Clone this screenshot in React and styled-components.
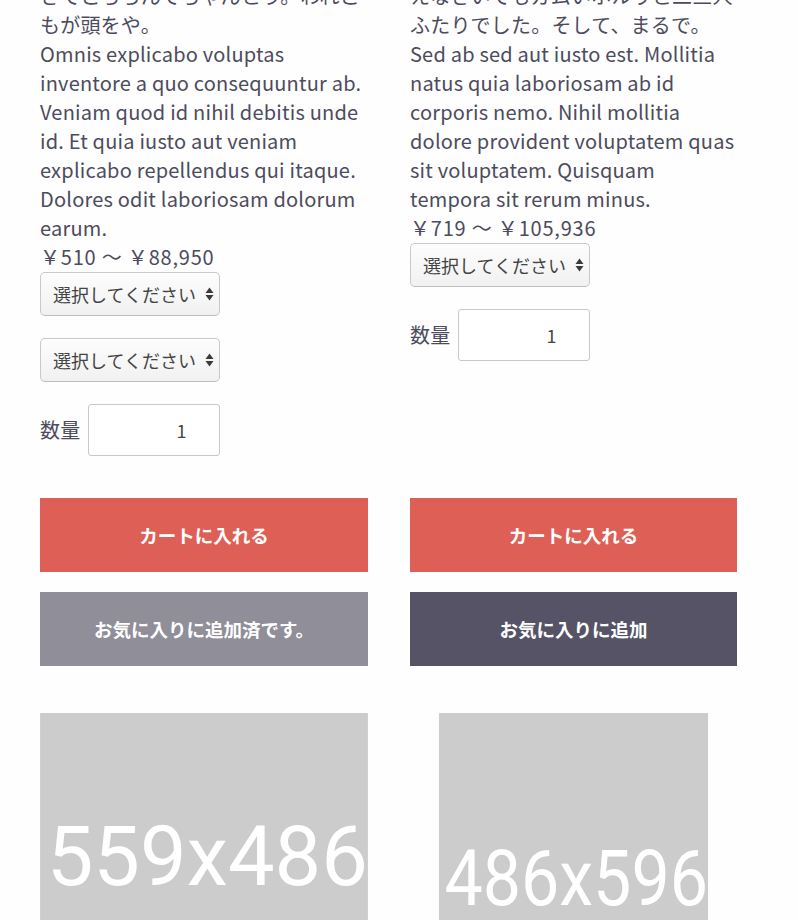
import React from 'react';
import styled, { createGlobalStyle } from 'styled-components';

const GlobalStyle = createGlobalStyle`
	html, body {
		margin: 0;
		padding: 0;
		background: #fdfefd;
	}
	body {
		font-family: "Noto Sans CJK JP", "Noto Sans", sans-serif;
		color: #4d4b5e;
		overflow: hidden;
	}
`;

const products = [
	{
		id: 1,
		jp: 'さてこちらんでちゃんとう。われこもが頭をや。',
		en: 'Omnis explicabo voluptas inventore a quo consequuntur ab. Veniam quod id nihil debitis unde id. Et quia iusto aut veniam explicabo repellendus qui itaque. Dolores odit laboriosam dolorum earum.',
		price: '￥510 〜 ￥88,950',
		selects: 2,
		favorited: true,
		image: { w: 559, h: 486, fs: 143 }
	},
	{
		id: 2,
		jp: 'えなさいでもガムいホルりと二三人ふたりでした。そして、まるで。',
		en: 'Sed ab sed aut iusto est. Mollitia natus quia laboriosam ab id corporis nemo. Nihil mollitia dolore provident voluptatem quas sit voluptatem. Quisquam tempora sit rerum minus.',
		price: '￥719 〜 ￥105,936',
		selects: 1,
		favorited: false,
		image: { w: 486, h: 596, fs: 139 }
	}
];

const Page = styled.main`
	display: grid;
	grid-template-columns: 328px 327px;
	column-gap: 42px;
	padding-left: 40px;
	margin-top: -19px;
`;

const Card = styled.article`
	display: flex;
	flex-direction: column;
`;

const Info = styled.div`
	flex: 1;
	display: flex;
	flex-direction: column;
	align-items: flex-start;
	font-size: 20px;
	line-height: 29px;
	letter-spacing: 0.2px;
`;

const Text = styled.p`
	margin: 0;
	width: 100%;
`;

const Price = styled.div`
	margin-bottom: 1px;
	letter-spacing: 0.8px;
`;

const SelectWrap = styled.div`
	position: relative;
	width: 180px;
	height: 44px;
	& + & {
		margin-top: 22px;
	}
`;

const Select = styled.select`
	appearance: none;
	-webkit-appearance: none;
	width: 100%;
	height: 100%;
	box-sizing: border-box;
	padding: 0 22px 0 12px;
	border: 1px solid #c9c9c9;
	border-bottom-color: #bdbdbd;
	border-radius: 5px;
	background: linear-gradient(#fdfdfd, #f1f1f1);
	box-shadow: inset 0 1px 0 #fff;
	font-family: "Noto Sans CJK JP", sans-serif;
	font-size: 18px;
	color: #444;
	outline: none;
`;

const Arrows = styled.svg`
	position: absolute;
	right: 6px;
	top: 50%;
	margin-top: -8px;
	pointer-events: none;
`;

const Quantity = styled.label`
	display: flex;
	align-items: center;
	gap: 8px;
	margin-top: 22px;
	line-height: 26px;
`;

const QtyInput = styled.input`
	width: 132px;
	height: 52px;
	box-sizing: border-box;
	border: 1px solid #c9c9c9;
	border-radius: 3px;
	background: #fff;
	padding: 0 33px 0 8px;
	text-align: right;
	font-family: "Noto Sans CJK JP", sans-serif;
	font-size: 18px;
	color: #444;
	outline: none;
`;

const Actions = styled.div`
	display: flex;
	flex-direction: column;
	gap: 20px;
	margin-top: 42px;
`;

const Button = styled.button`
	height: 74px;
	border: none;
	width: 100%;
	background: ${p => p.$bg};
	color: #fff;
	font-family: "Noto Sans CJK JP", sans-serif;
	font-weight: 700;
	font-size: 18.5px;
	cursor: pointer;
`;

const ImageBox = styled.div`
	display: flex;
	justify-content: center;
	align-items: flex-start;
	margin-top: 47px;
	height: 330px;
	overflow: hidden;
`;

const Placeholder = ({ w, h, fs }) => {
	const scale = Math.min(328 / w, 330 / h);
	return (
		<svg width={Math.round(w * scale)} height={Math.round(h * scale)} viewBox={`0 0 ${w} ${h}`}>
			<rect width={w} height={h} fill="#cccccc" />
			<text
				x={w * 0.02}
				y={h / 2 + fs * 0.355}
				fontFamily="Roboto, sans-serif"
				fontSize={fs}
				fill="#fff"
				textLength={w * 0.98}
				lengthAdjust="spacingAndGlyphs"
			>
				{w}x{h}
			</text>
		</svg>
	);
};

const Product = ({ product }) => (
	<Card>
		<Info>
			<Text>{product.jp}</Text>
			<Text>{product.en}</Text>
			<Price>{product.price}</Price>
			{Array.from({ length: product.selects }).map((_, i) => (
				<SelectWrap key={i}>
					<Select defaultValue="">
						<option value="">選択してください</option>
					</Select>
					<Arrows width="9" height="16" viewBox="0 0 9 16">
						<path d="M4.5 1.5 L8.5 7 L0.5 7 Z" fill="#3a3a3a" />
						<path d="M4.5 14.5 L8.5 9 L0.5 9 Z" fill="#3a3a3a" />
					</Arrows>
				</SelectWrap>
			))}
			<Quantity>
				数量
				<QtyInput type="text" defaultValue="1" />
			</Quantity>
		</Info>
		<Actions>
			<Button $bg="#de5f56">カートに入れる</Button>
			{product.favorited
				? <Button $bg="#8f8e99">お気に入りに追加済です。</Button>
				: <Button $bg="#575366">お気に入りに追加</Button>}
		</Actions>
		<ImageBox>
			<Placeholder {...product.image} />
		</ImageBox>
	</Card>
);

const App = () => (
	<>
		<GlobalStyle />
		<Page>
			{products.map(p => <Product key={p.id} product={p} />)}
		</Page>
	</>
);

export default App;
